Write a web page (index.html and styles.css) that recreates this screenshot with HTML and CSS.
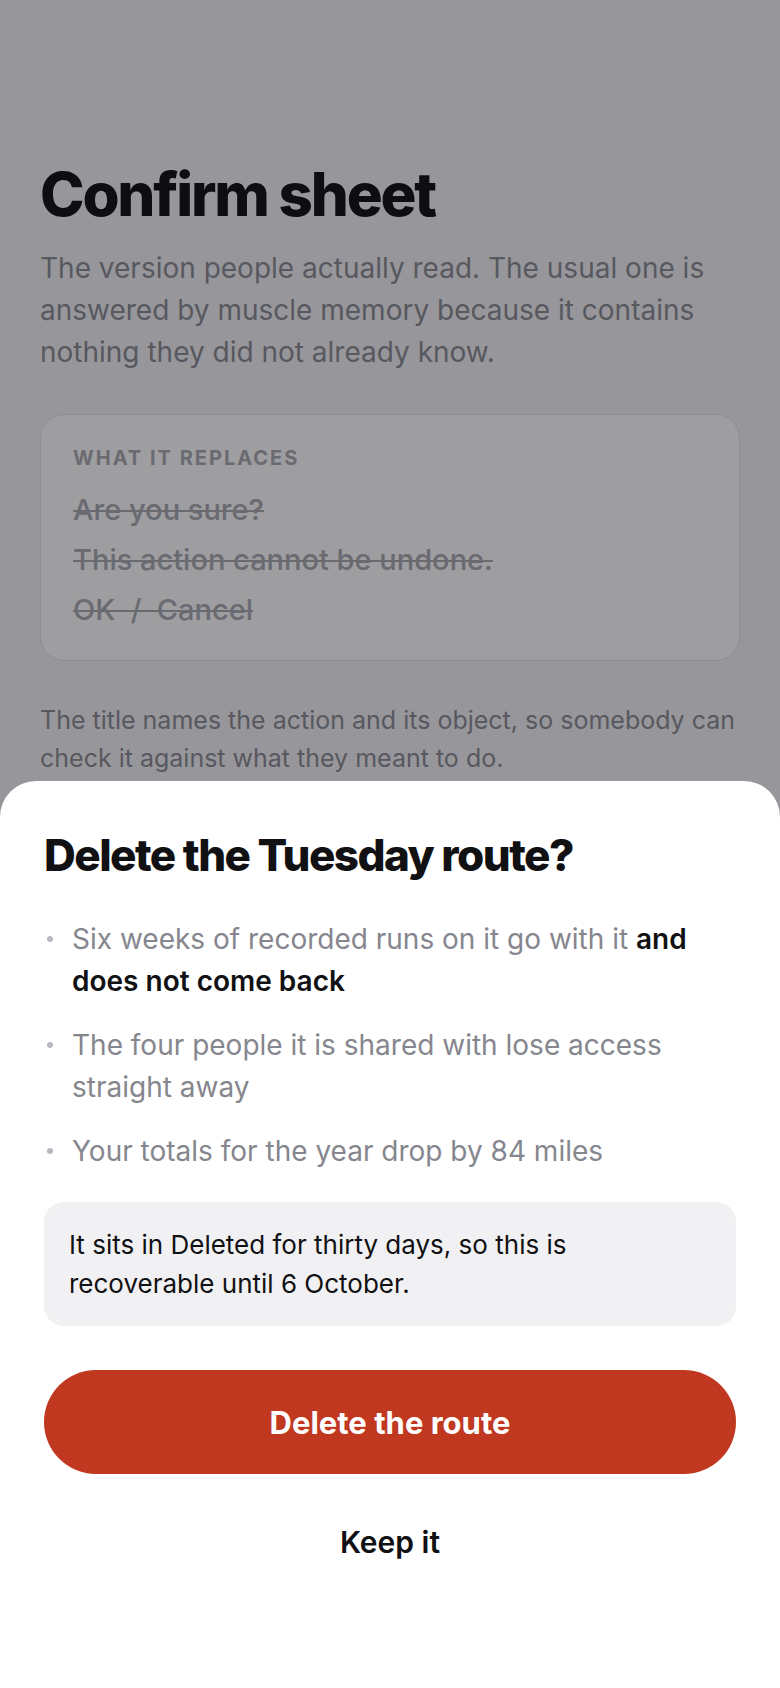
FILE: index.html
```html
<!DOCTYPE html>
<html lang="en">
<head>
  <meta charset="UTF-8" />
  <meta name="viewport" content="width=device-width, initial-scale=1.0"/>
  <title>Confirm sheet</title>
  <link rel="stylesheet" href="styles.css">
</head>
<body>
  <!-- Page behind the sheet -->
  <main class="page">
    <h1 class="page-title">Confirm sheet</h1>
    <p class="lede">The version people actually read. The usual one is answered by muscle memory because it contains nothing they did not already know.</p>

    <section class="replaces">
      <p class="replaces-label">What it replaces</p>
      <ul class="replaces-list">
        <li><s>Are you sure?</s></li>
        <li><s>This action cannot be undone.</s></li>
        <li><s>OK&nbsp; /&nbsp; Cancel</s></li>
      </ul>
    </section>

    <p class="note">The title names the action and its object, so somebody can check it against what they meant to do.</p>
  </main>

  <!-- Dim layer -->
  <div class="scrim"></div>

  <!-- Confirm sheet -->
  <div class="sheet" role="dialog" aria-labelledby="sheet-title">
    <h2 id="sheet-title" class="sheet-title">Delete the Tuesday route?</h2>

    <ul class="consequences">
      <li>Six weeks of recorded runs on it go with it <strong>and does not come back</strong></li>
      <li>The four people it is shared with lose access straight away</li>
      <li>Your totals for the year drop by 84 miles</li>
    </ul>

    <p class="recover">It sits in Deleted for thirty days, so this is recoverable until 6 October.</p>

    <button class="btn btn-danger">Delete the route</button>
    <button class="btn btn-plain">Keep it</button>
  </div>
</body>
</html>
```

FILE: styles.css
```css
* {
  box-sizing: border-box;
}

body {
  margin: 0;
  font-family: "Inter", "Liberation Sans", sans-serif;
  background-color: #f4f4f6;
  color: #111114;
}

.page {
  padding: 161px 40px 0;
}

.page-title {
  margin: 0 0 20px;
  font-size: 60px;
  line-height: 1.1;
  font-weight: 800;
  letter-spacing: -0.037em;
  color: #0f0f12;
}

.lede {
  margin: 0;
  font-size: 28px;
  line-height: 1.5;
  color: #8a8a92;
}

.replaces {
  margin-top: 41px;
  padding: 30px 32px 31px;
  background: #fff;
  border: 1px solid #e2e2e6;
  border-radius: 24px;
}

.replaces-label {
  margin: 0 0 19px;
  font-size: 20px;
  line-height: 1.3;
  font-weight: 700;
  letter-spacing: 0.1em;
  text-transform: uppercase;
  color: #a8a8b0;
}

.replaces-list {
  list-style: none;
  margin: 0;
  padding: 0;
  display: flex;
  flex-direction: column;
  gap: 11px;
}

.replaces-list li {
  font-size: 29px;
  line-height: 39px;
  font-weight: 500;
  color: #a8a8b0;
}

.replaces-list s {
  text-decoration-thickness: 2px;
}

.note {
  margin: 40px 0 0;
  font-size: 25px;
  line-height: 38px;
  color: #8a8a92;
}

.scrim {
  position: fixed;
  inset: 0;
  background: rgba(12, 12, 20, 0.4);
}

.sheet {
  position: fixed;
  left: 0;
  right: 0;
  bottom: 0;
  padding: 49px 44px 94px;
  background: #fff;
  border-radius: 36px 36px 0 0;
}

.sheet-title {
  margin: 0;
  font-size: 44px;
  line-height: 50px;
  font-weight: 800;
  letter-spacing: -0.035em;
  color: #111114;
}

.consequences {
  list-style: none;
  margin: 38px 0 0;
  padding: 0 0 0 28px;
  display: flex;
  flex-direction: column;
  gap: 22px;
}

.consequences li {
  position: relative;
  font-size: 28px;
  line-height: 1.5;
  color: #86868e;
}

.consequences li::before {
  content: "";
  position: absolute;
  left: -25px;
  top: 18px;
  width: 6px;
  height: 6px;
  border-radius: 50%;
  background: #b8b8c0;
}

.consequences strong {
  font-weight: 600;
  color: #111114;
}

.recover {
  margin: 30px 0 0;
  padding: 23px 30px 23px 25px;
  background: #f1f1f3;
  border-radius: 20px;
  font-size: 26px;
  line-height: 1.5;
  color: #111114;
}

.btn {
  display: block;
  width: 100%;
  height: 104px;
  border: none;
  border-radius: 52px;
  font-family: inherit;
  cursor: pointer;
}

.btn-danger {
  margin-top: 44px;
  background: #c13820;
  color: #fff;
  font-size: 31px;
  font-weight: 700;
}

.btn-plain {
  margin-top: 16px;
  background: transparent;
  color: #111114;
  font-size: 30px;
  font-weight: 600;
}
```
